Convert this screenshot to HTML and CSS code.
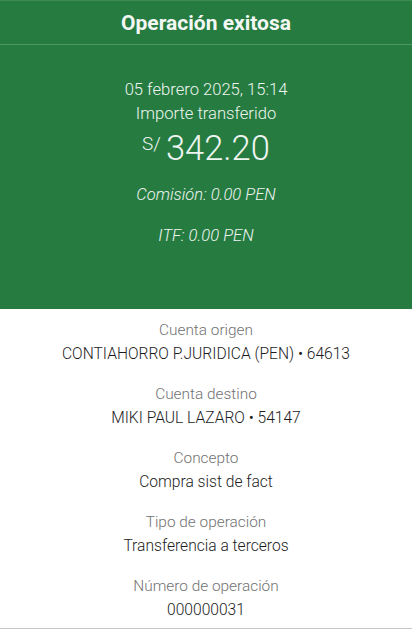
FILE: index.html
```html
<!DOCTYPE html>
<html lang="es">
<head>
  <meta charset="UTF-8">
  <meta name="viewport" content="width=device-width, initial-scale=1">
  <title>Operación exitosa</title>
  <link rel="stylesheet" href="styles.css">
</head>
<body>
  <div class="receipt">
    <header class="top-bar">
      <h1>Operación exitosa</h1>
    </header>
    <section class="summary">
      <p class="date">05 febrero 2025, 15:14</p>
      <p class="caption">Importe transferido</p>
      <p class="amount"><span class="currency">S/</span>342.20</p>
      <p class="fee">Comisión: 0.00 PEN</p>
      <p class="fee">ITF: 0.00 PEN</p>
    </section>
    <section class="details">
      <div class="item">
        <span class="label">Cuenta origen</span>
        <span class="value">CONTIAHORRO P.JURIDICA (PEN) • 64613</span>
      </div>
      <div class="item">
        <span class="label">Cuenta destino</span>
        <span class="value">MIKI PAUL LAZARO • 54147</span>
      </div>
      <div class="item">
        <span class="label">Concepto</span>
        <span class="value">Compra sist de fact</span>
      </div>
      <div class="item">
        <span class="label">Tipo de operación</span>
        <span class="value">Transferencia a terceros</span>
      </div>
      <div class="item">
        <span class="label">Número de operación</span>
        <span class="value">000000031</span>
      </div>
    </section>
  </div>
</body>
</html>
```

FILE: styles.css
```css
body, html {
  margin: 0;
  padding: 0;
  background-color: #ffffff;
  font-family: Roboto, "Liberation Sans", sans-serif;
}
p {
  margin: 0;
}
.receipt {
  width: 412px;
  height: 629px;
  border-bottom: 1px solid #c6c6c6;
  box-sizing: border-box;
}
/* Green header */
.top-bar {
  background-color: #267b41;
  border-top: 1px solid #3d8a55;
  border-bottom: 1px solid #4c9462;
  height: 45px;
  box-sizing: border-box;
  display: flex;
  align-items: center;
  justify-content: center;
}
.top-bar h1 {
  margin: 0;
  color: #f4f8f5;
  font-size: 21px;
  font-weight: 700;
}
.summary {
  background-color: #267b41;
  color: #eef5f0;
  height: 264px;
  box-sizing: border-box;
  padding-top: 33px;
  text-align: center;
  font-weight: 300;
}
.date, .caption {
  font-size: 16.6px;
  line-height: 24px;
}
.amount {
  font-size: 34.5px;
  line-height: 40px;
  margin-top: -2px;
}
.currency {
  font-size: 19px;
  vertical-align: 10px;
  margin-right: 5px;
}
.fee {
  font-style: italic;
  font-size: 16.6px;
  line-height: 20px;
  margin-top: 17px;
}
.fee + .fee {
  margin-top: 21px;
}
/* Detail list */
.details {
  padding-top: 11px;
  display: flex;
  flex-direction: column;
  gap: 20px;
  text-align: center;
}
.item {
  display: flex;
  flex-direction: column;
  gap: 4px;
}
.label {
  color: #727272;
  font-size: 15.4px;
  line-height: 20px;
  font-weight: 300;
}
.value {
  color: #1c1c1c;
  font-size: 15.6px;
  line-height: 20px;
  font-weight: 300;
}
```
